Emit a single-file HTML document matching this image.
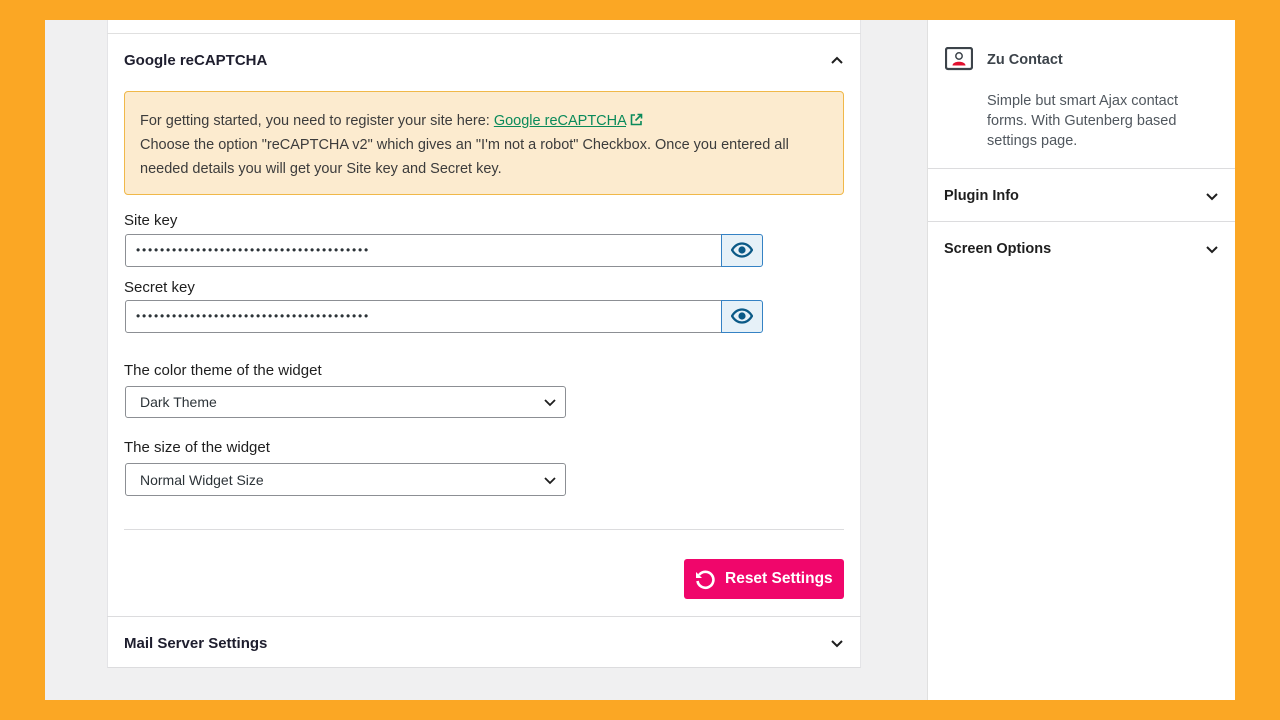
<!DOCTYPE html>
<html><head><style>
*{box-sizing:border-box;margin:0;padding:0}
body{width:1280px;height:720px;background:#fba724;position:relative;overflow:hidden;font-family:"Liberation Sans",sans-serif;}
.a{position:absolute}
.gray{left:45px;top:20px;width:882px;height:680px;background:#f0f0f1}
.panel{left:107px;top:20px;width:754px;height:648px;background:#fff;border-left:1px solid #e4e4e7;border-right:1px solid #e4e4e7;border-bottom:1px solid #dcdcde}
.side{left:927px;top:20px;width:308px;height:680px;background:#fff;border-left:1px solid #e0e0e0}
.h{font-weight:bold;font-size:15px;color:#1e1e2e}
.lbl{font-size:15px;color:#1e1e1e}
.inp{border:1px solid #8c8f94;border-radius:3px;background:#fff;font-size:14px;color:#2c3338}
.eye{left:721px;width:42px;height:33px;background:#e6f1f8;border:1px solid #3582c4;border-radius:0 3px 3px 0}
.chev{width:14px;height:14px}
.dots{letter-spacing:1.8px;font-size:12px;padding:8px 10px !important}
</style></head><body>
<div class="a gray"></div>
<div class="a panel"></div>
<div class="a" style="left:107px;top:33px;width:754px;border-top:1px solid #e0e0e0"></div>
<div class="a h" style="left:124px;top:52px">Google reCAPTCHA</div>
<svg class="a chev" style="left:830px;top:53px" viewBox="0 0 14 14"><path d="M2 10 L7 5 L12 10" fill="none" stroke="#1e1e1e" stroke-width="2"/></svg>
<div class="a" style="left:124px;top:91px;width:720px;height:104px;background:#fcebcf;border:1px solid #f0b849;border-radius:4px;padding:17px 15px;font-size:14.5px;line-height:24px;color:#3c3c3c">For getting started, you need to register your site here: <span style="color:#0a8a5a;text-decoration:underline">Google reCAPTCHA</span> <svg width="13" height="13" viewBox="0 0 13 13" style="vertical-align:-1px"><path d="M5 2H1.5v9.5H11V8M7.5 1.5H11.5V5.5M11.5 1.5L5.5 7.5" fill="none" stroke="#0a8a5a" stroke-width="1.6"/></svg><br>Choose the option "reCAPTCHA v2" which gives an "I'm not a robot" Checkbox. Once you entered all needed details you will get your Site key and Secret key.</div>
<div class="a lbl" style="left:124px;top:212px">Site key</div>
<div class="a inp dots" style="left:125px;top:234px;width:600px;height:33px;border-radius:3px 0 0 3px">•••••••••••••••••••••••••••••••••••••••</div>
<div class="a eye" style="top:234px"></div>
<svg class="a" style="left:731px;top:242px" width="22" height="16" viewBox="0 0 22 16"><path d="M1 8C4 3 7.5 1.5 11 1.5S18 3 21 8C18 13 14.5 14.5 11 14.5S4 13 1 8Z" fill="none" stroke="#0b5a87" stroke-width="2.2"/><circle cx="11" cy="8" r="3.6" fill="#0b5a87"/></svg>
<div class="a lbl" style="left:124px;top:279px">Secret key</div>
<div class="a inp dots" style="left:125px;top:300px;width:600px;height:33px;border-radius:3px 0 0 3px">•••••••••••••••••••••••••••••••••••••••</div>
<div class="a eye" style="top:300px"></div>
<svg class="a" style="left:731px;top:308px" width="22" height="16" viewBox="0 0 22 16"><path d="M1 8C4 3 7.5 1.5 11 1.5S18 3 21 8C18 13 14.5 14.5 11 14.5S4 13 1 8Z" fill="none" stroke="#0b5a87" stroke-width="2.2"/><circle cx="11" cy="8" r="3.6" fill="#0b5a87"/></svg>
<div class="a lbl" style="left:124px;top:362px">The color theme of the widget</div>
<div class="a inp" style="left:125px;top:386px;width:441px;height:32px;padding:7px 14px">Dark Theme</div>
<svg class="a chev" style="left:543px;top:395px" viewBox="0 0 14 14"><path d="M2 5 L7 10 L12 5" fill="none" stroke="#1e1e1e" stroke-width="1.8"/></svg>
<div class="a lbl" style="left:124px;top:439px">The size of the widget</div>
<div class="a inp" style="left:125px;top:463px;width:441px;height:33px;padding:8px 14px">Normal Widget Size</div>
<svg class="a chev" style="left:543px;top:473px" viewBox="0 0 14 14"><path d="M2 5 L7 10 L12 5" fill="none" stroke="#1e1e1e" stroke-width="1.8"/></svg>
<div class="a" style="left:124px;top:529px;width:720px;border-top:1px solid #dcdcde"></div>
<div class="a" style="left:684px;top:559px;width:160px;height:40px;background:#f0066b;border-radius:3px;color:#fff;font-weight:bold;font-size:15.5px;padding:11px 0 0 41px">Reset Settings</div>
<svg class="a" style="left:694px;top:568px" width="22" height="22" viewBox="0 0 22 22"><path d="M5 7A8 8 0 1 1 3.5 13" fill="none" stroke="#fff" stroke-width="2.6"/><path d="M2 4V10H8Z" fill="#fff"/></svg>
<div class="a" style="left:107px;top:616px;width:754px;border-top:1px solid #dcdcde"></div>
<div class="a h" style="left:124px;top:635px">Mail Server Settings</div>
<svg class="a chev" style="left:830px;top:636px" viewBox="0 0 14 14"><path d="M2 5 L7 10 L12 5" fill="none" stroke="#1e1e1e" stroke-width="2"/></svg>
<div class="a side"></div>
<svg class="a" style="left:945px;top:47px" width="28" height="24" viewBox="0 0 28 24"><rect x="1" y="1" width="26" height="21" rx="2" fill="#fff" stroke="#3c434a" stroke-width="2.2"/><circle cx="14" cy="9" r="3.2" fill="none" stroke="#3c434a" stroke-width="1.5"/><path d="M7.5 18.5C7.5 13.5 20.5 13.5 20.5 18.5Z" fill="#e0102e"/></svg>
<div class="a" style="left:987px;top:52px;font-size:14.5px;font-weight:bold;color:#3c434a">Zu Contact</div>
<div class="a" style="left:987px;top:91px;width:230px;font-size:14.5px;line-height:20px;color:#50575e">Simple but smart Ajax contact forms. With Gutenberg based settings page.</div>
<div class="a" style="left:928px;top:168px;width:307px;border-top:1px solid #dcdcde"></div>
<div class="a" style="left:944px;top:188px;font-size:14.5px;font-weight:bold;color:#1e1e1e">Plugin Info</div>
<svg class="a chev" style="left:1205px;top:189px" viewBox="0 0 14 14"><path d="M2 5 L7 10 L12 5" fill="none" stroke="#1e1e1e" stroke-width="2"/></svg>
<div class="a" style="left:928px;top:221px;width:307px;border-top:1px solid #dcdcde"></div>
<div class="a" style="left:944px;top:241px;font-size:14.5px;font-weight:bold;color:#1e1e1e">Screen Options</div>
<svg class="a chev" style="left:1205px;top:242px" viewBox="0 0 14 14"><path d="M2 5 L7 10 L12 5" fill="none" stroke="#1e1e1e" stroke-width="2"/></svg>
</body></html>
